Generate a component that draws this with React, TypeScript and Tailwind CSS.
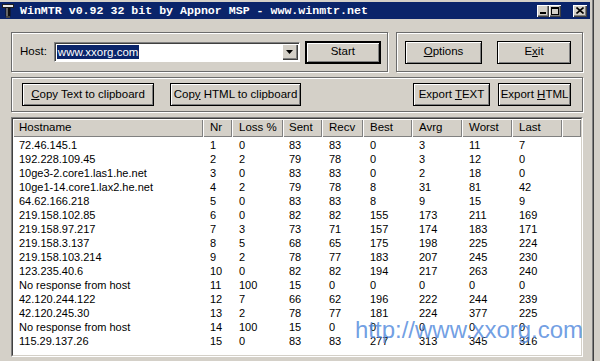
import React from 'react'

// WinMTR の結果一覧
const rows: (string | number)[][] = [
  ['72.46.145.1', 1, 0, 83, 83, 0, 3, 11, 7],
  ['192.228.109.45', 2, 2, 79, 78, 0, 3, 12, 0],
  ['10ge3-2.core1.las1.he.net', 3, 0, 83, 83, 0, 2, 18, 0],
  ['10ge1-14.core1.lax2.he.net', 4, 2, 79, 78, 8, 31, 81, 42],
  ['64.62.166.218', 5, 0, 83, 83, 8, 9, 15, 9],
  ['219.158.102.85', 6, 0, 82, 82, 155, 173, 211, 169],
  ['219.158.97.217', 7, 3, 73, 71, 157, 174, 183, 171],
  ['219.158.3.137', 8, 5, 68, 65, 175, 198, 225, 224],
  ['219.158.103.214', 9, 2, 78, 77, 183, 207, 245, 230],
  ['123.235.40.6', 10, 0, 82, 82, 194, 217, 263, 240],
  ['No response from host', 11, 100, 15, 0, 0, 0, 0, 0],
  ['42.120.244.122', 12, 7, 66, 62, 196, 222, 244, 239],
  ['42.120.245.30', 13, 2, 78, 77, 181, 224, 377, 225],
  ['No response from host', 14, 100, 15, 0, 0, 0, 0, 0],
  ['115.29.137.26', 15, 0, 83, 83, 277, 313, 345, 316],
]

const columns = [
  { label: 'Hostname', w: 'w-[190px] pl-[6px]' },
  { label: 'Nr', w: 'w-[29px] pl-[7px]' },
  { label: 'Loss %', w: 'w-[51px] pl-[7px]' },
  { label: 'Sent', w: 'w-[39px] pl-[6px]' },
  { label: 'Recv', w: 'w-[41px] pl-[7px]' },
  { label: 'Best', w: 'w-[49px] pl-[7px]' },
  { label: 'Avrg', w: 'w-[50px] pl-[7px]' },
  { label: 'Worst', w: 'w-[50px] pl-[7px]' },
  { label: 'Last', w: 'w-[50px] pl-[7px]' },
]

const raised = 'bg-[#d4d0c8] shadow-[inset_1px_1px_0_#fff,inset_-1px_-1px_0_#808080]'
const groupBox = 'border border-[#6b6b6b] shadow-[inset_1px_1px_0_#fff,1px_1px_0_#fff]'

function Button({ className, children, isDefault }: { className: string; children: React.ReactNode; isDefault?: boolean }) {
  return (
    <div
      className={`flex h-[23px] shrink-0 items-center justify-center text-[11.5px] text-black ${raised} ${
        isDefault ? 'border-2 border-black' : 'border border-black'
      } ${className}`}
    >
      <span className="whitespace-pre">{children}</span>
    </div>
  )
}

function TitleButton({ children, className }: { children: React.ReactNode; className?: string }) {
  return (
    <div
      className={`flex h-[12px] w-[12px] items-center justify-center bg-[#d4d0c8] shadow-[inset_1px_1px_0_#fff,inset_-1px_-1px_0_#404040,inset_-2px_-2px_0_#808080] ${className ?? ''}`}
    >
      {children}
    </div>
  )
}

export default function App() {
  return (
    <div className="flex h-[361px] w-[600px] overflow-hidden bg-[#d4d0c8] font-['Liberation_Sans',Arial,sans-serif] text-black">
      {/* ウィンドウ本体 */}
      <div className="flex w-[594px] shrink-0 flex-col border-r border-[#404040] pt-[2px] shadow-[inset_-1px_0_0_#808080]">
        {/* タイトルバー */}
        <div className="mr-[3px] flex h-[17px] items-center bg-[#0a246a]">
          <svg width="12" height="14" viewBox="0 0 12 14" className="ml-[2px]">
            <rect x="0.5" y="0.5" width="11" height="3" fill="#e8e8e8" stroke="#202020" />
            <rect x="3.5" y="3.5" width="5" height="9" fill="#111" />
            <rect x="4.5" y="4" width="1" height="8" fill="#bbb" />
            <rect x="4" y="12" width="4" height="2" fill="#444" />
          </svg>
          <span className="ml-[6px] font-['Liberation_Mono',monospace] text-[11.6px] leading-none font-bold whitespace-pre text-white">
            WinMTR v0.92 32 bit by Appnor MSP - www.winmtr.net
          </span>
          <div className="ml-auto flex items-center">
            <TitleButton>
              <div className="mt-[5px] h-[2px] w-[6px] bg-black" />
            </TitleButton>
            <TitleButton>
              <div className="h-[8px] w-[8px] border border-t-2 border-black" />
            </TitleButton>
            <TitleButton className="mr-[3px] ml-[12px] w-[14px]">
              <svg width="8" height="7" viewBox="0 0 8 7">
                <path d="M0.5 0.5 L7.5 6.5 M7.5 0.5 L0.5 6.5" stroke="#000" strokeWidth="1.6" />
              </svg>
            </TitleButton>
          </div>
        </div>

        <div className="flex flex-col pt-[13px] pl-[11px]">
          {/* Host / Start + Options / Exit */}
          <div className="flex h-[40px] gap-[8px]">
            <div className={`flex w-[377px] items-center pl-[8px] ${groupBox}`}>
              <span className="text-[11.5px]">Host:</span>
              <div className="ml-[7px] flex h-[20px] w-[246px] items-center border border-t-[#808080] border-r-white border-b-white border-l-[#808080] bg-white shadow-[inset_1px_1px_0_#404040]">
                <span className="ml-[2px] bg-[#0a246a] px-[1px] text-[11.5px] leading-[14px] text-white">www.xxorg.com</span>
                <div
                  className={`mr-[1px] ml-auto flex h-[16px] w-[16px] items-center justify-center bg-[#d4d0c8] shadow-[inset_1px_1px_0_#fff,inset_-1px_-1px_0_#404040,inset_-2px_-2px_0_#808080]`}
                >
                  <svg width="7" height="4" viewBox="0 0 7 4">
                    <path d="M0 0 H7 L3.5 4 Z" fill="#000" />
                  </svg>
                </div>
              </div>
              <Button className="ml-[5px] w-[76px]" isDefault>
                Start
              </Button>
            </div>
            <div className={`flex w-[187px] items-center gap-[15px] pl-[8px] ${groupBox}`}>
              <Button className="w-[77px]">
                <span className="underline">O</span>ptions
              </Button>
              <Button className="w-[74px]">
                E<span className="underline">x</span>it
              </Button>
            </div>
          </div>

          {/* コピー・エクスポート */}
          <div className={`mt-[5px] flex h-[35px] w-[572px] items-center pl-[10px] ${groupBox}`}>
            <Button className="w-[132px]">
              <span className="underline">C</span>opy Text to clipboard
            </Button>
            <Button className="ml-[16px] w-[131px]">
              Cop<span className="underline">y</span> HTML to clipboard
            </Button>
            <Button className="ml-auto w-[77px]">
              Export <span className="underline">T</span>EXT
            </Button>
            <Button className="mr-[11px] ml-[8px] w-[73px]">
              Export <span className="underline">H</span>TML
            </Button>
          </div>

          {/* 結果リスト */}
          <div className="relative mt-[5px] h-[240px] w-[572px] border border-t-[#808080] border-r-white border-b-white border-l-[#808080]">
            <div className="flex h-full flex-col overflow-hidden border border-t-[#404040] border-r-[#d4d0c8] border-b-[#d4d0c8] border-l-[#404040] bg-white">
              <div className="flex h-[18px] shrink-0 bg-[#d4d0c8]">
                {columns.map((c) => (
                  <div key={c.label} className={`flex items-center text-[11.5px] ${raised} ${c.w}`}>
                    {c.label}
                  </div>
                ))}
                <div className={`flex-1 ${raised}`} />
              </div>
              <div className="flex flex-col pt-[1px]">
                {rows.map((r, i) => (
                  <div key={i} className="flex h-[14px] items-center text-[11px] leading-[14px]">
                    {r.map((v, j) => (
                      <div key={j} className={`whitespace-nowrap ${columns[j].w}`}>
                        {v}
                      </div>
                    ))}
                  </div>
                ))}
              </div>
            </div>
            {/* 透かし */}
            <div className="absolute top-[200px] left-[343px] text-[24px] leading-none whitespace-nowrap text-[#4d86dc]/80">
              http://www.xxorg.com
            </div>
          </div>
        </div>
      </div>
      <div className="flex-1 bg-[#d4d0c8]" />
    </div>
  )
}
